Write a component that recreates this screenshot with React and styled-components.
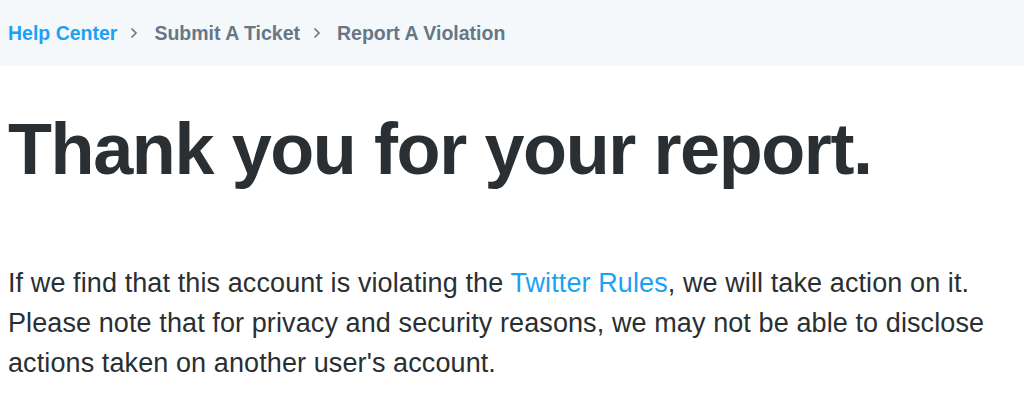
import React from "react";
import styled, { createGlobalStyle } from "styled-components";

const GlobalStyle = createGlobalStyle`
  html, body {
    margin: 0;
    padding: 0;
    background: #ffffff;
    font-family: "Liberation Sans", Arial, Helvetica, sans-serif;
    color: #292f33;
  }
`;

const Page = styled.div`
  width: 1024px;
  height: 417px;
  overflow: hidden;
`;

const Breadcrumbs = styled.nav`
  display: flex;
  align-items: center;
  height: 66px;
  padding: 0 8px;
  background: #f5f8fa;
  font-size: 19.5px;
  font-weight: 700;
`;

const Crumb = styled.a`
  color: ${(props) => (props.active ? "#1da1f2" : "#657786")};
  text-decoration: none;
`;

const Sep = styled.span`
  display: flex;
  align-items: center;
  margin: 0 16px 0 13px;
  color: #657786;
`;

const Content = styled.main`
  padding: 0 8px;
`;

const Title = styled.h1`
  margin: 42px 0 0;
  font-size: 72px;
  font-weight: 700;
  line-height: 82px;
  letter-spacing: -1.4px;
  color: #292f33;
`;

const Text = styled.p`
  margin: 73px 0 0;
  font-size: 27px;
  line-height: 40px;
  letter-spacing: 0.1px;
  color: #292f33;
`;

const Link = styled.a`
  color: #1da1f2;
  text-decoration: none;
`;

const Chevron = () => (
  <svg width="8" height="12" viewBox="0 0 8 12" fill="none">
    <path d="M1.5 1.5L6 6l-4.5 4.5" stroke="currentColor" strokeWidth="1.6" />
  </svg>
);

const App = () => {
  return (
    <Page>
      <GlobalStyle />
      <Breadcrumbs>
        <Crumb active href="#">Help Center</Crumb>
        <Sep><Chevron /></Sep>
        <Crumb href="#">Submit A Ticket</Crumb>
        <Sep><Chevron /></Sep>
        <Crumb href="#">Report A Violation</Crumb>
      </Breadcrumbs>
      <Content>
        <Title>Thank you for your report.</Title>
        <Text>
          If we find that this account is violating the <Link href="#">Twitter Rules</Link>, we will take action on it.
          <br />
          Please note that for privacy and security reasons, we may not be able to disclose
          <br />
          actions taken on another user's account.
        </Text>
      </Content>
    </Page>
  );
};

export default App;
